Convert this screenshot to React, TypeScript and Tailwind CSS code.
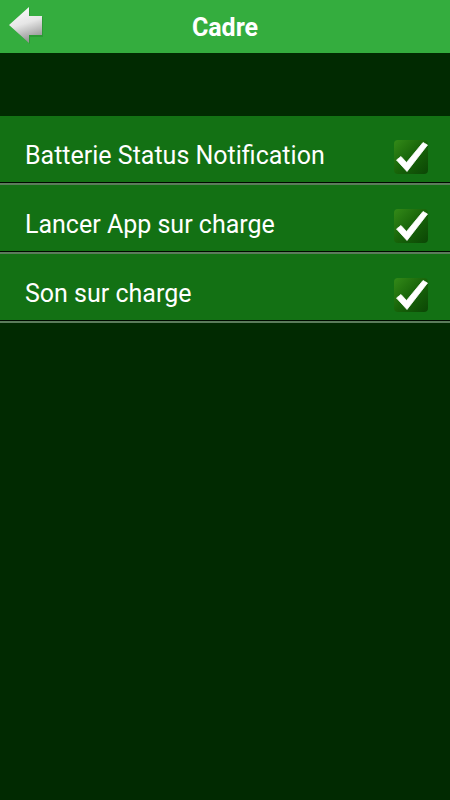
import React from 'react';

const rows = ['Batterie Status Notification', 'Lancer App sur charge', 'Son sur charge'];

const BackArrow = () => (
  <svg width="44" height="50" viewBox="0 0 44 50">
    <defs>
      <linearGradient id="arrowFill" x1="0" y1="0" x2="0.3" y2="1">
        <stop offset="0" stopColor="#ffffff" />
        <stop offset="0.55" stopColor="#e6e6e6" />
        <stop offset="1" stopColor="#9a9a9a" />
      </linearGradient>
    </defs>
    <polygon points="10,26 30,8 30,17 43,17 43,37 30,37 30,44" fill="#1f7a26" opacity="0.35" />
    <polygon points="9,25 29,7 29,16 42,16 42,35 29,35 29,43" fill="url(#arrowFill)" />
  </svg>
);

const CheckBox = () => (
  <div className="relative w-[36px] h-[36px]">
    <div className="absolute left-[1px] top-[2px] w-[34px] h-[34px] rounded-[4px] bg-gradient-to-br from-[#338a18] via-[#176409] to-[#0b4605]" />
    <svg className="absolute left-0 top-0" width="40" height="38" viewBox="0 0 40 38">
      <path
        d="M3.5 22 L8 18.5 L13.5 24.5 L30 4.5 L34.5 7 L14 33.5 Z"
        fill="#ffffff"
        stroke="#ffffff"
        strokeWidth="0.8"
        strokeLinejoin="round"
      />
    </svg>
  </div>
);

export default function App() {
  return (
    <div className="w-[450px] h-[800px] bg-[#012a01] flex flex-col" style={{ fontFamily: 'Roboto, "Noto Sans", sans-serif' }}>
      <div className="h-[53px] bg-[#34ad3e] flex items-center relative shrink-0">
        <div className="absolute left-0 top-0">
          <BackArrow />
        </div>
        <div className="flex-1 text-center text-white font-bold text-[25px] leading-none pt-[2px]">Cadre</div>
      </div>
      <div className="h-[63px] shrink-0" />
      <div className="flex flex-col">
        {rows.map((r) => (
          <div key={r} className="flex flex-col">
            <div className="h-[66px] bg-[#137114] flex items-center justify-between pl-[25px] pr-[21px] pt-[13px]">
              <span className="text-white text-[25px] leading-none">{r}</span>
              <CheckBox />
            </div>
            <div className="h-[1px] bg-[#000a00]" />
            <div className="h-[2px] bg-[#5b7c5b]" />
          </div>
        ))}
      </div>
    </div>
  );
}
